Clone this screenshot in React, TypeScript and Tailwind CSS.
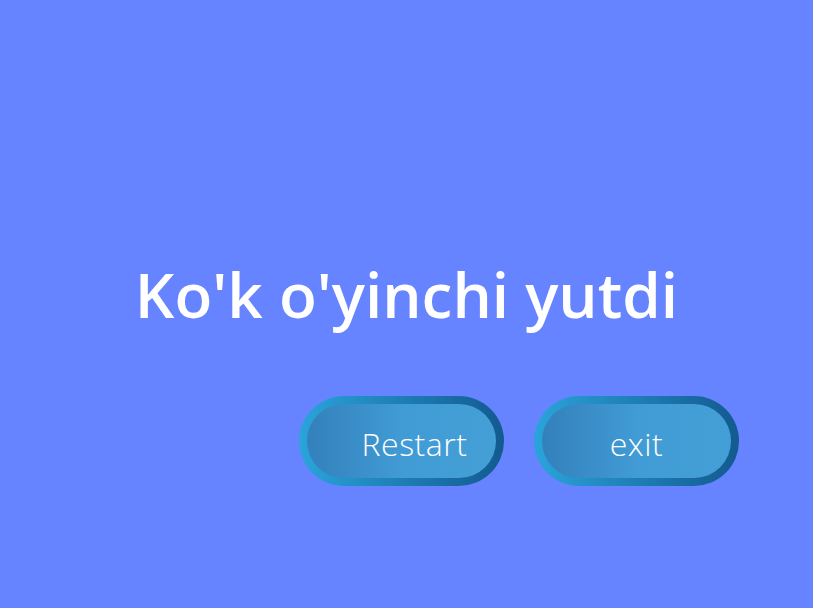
export default function App() {
  return (
    <div className="h-[608px] w-full bg-[#6684ff] flex flex-col items-center pt-[256px]">
      <h1 className="text-[62px] leading-[76px] font-semibold text-white" style={{ fontFamily: '"Open Sans", "Noto Sans", sans-serif' }}>
        Ko'k o'yinchi yutdi
      </h1>
      <div className="mt-[64px] flex w-full gap-[30px] pl-[299px]">
        {[
          { label: 'Restart', pad: 'pl-[26px]' },
          { label: 'exit', pad: 'pl-0' },
        ].map((b) => (
          <button
            key={b.label}
            className="w-[205px] h-[90px] rounded-full p-[8px] bg-gradient-to-r from-[#2aa4db] to-[#135a90]"
          >
            <span
              className={`flex h-full w-full items-center justify-center rounded-full bg-gradient-to-r from-[#3380bc] via-[#419bd4] to-[#449fd7] pt-[5px] text-[32px] tracking-[0.5px] text-white ${b.pad}`}
              style={{ fontFamily: '"Open Sans", "DejaVu Sans", sans-serif', fontWeight: 300 }}
            >
              {b.label}
            </span>
          </button>
        ))}
      </div>
    </div>
  );
}
